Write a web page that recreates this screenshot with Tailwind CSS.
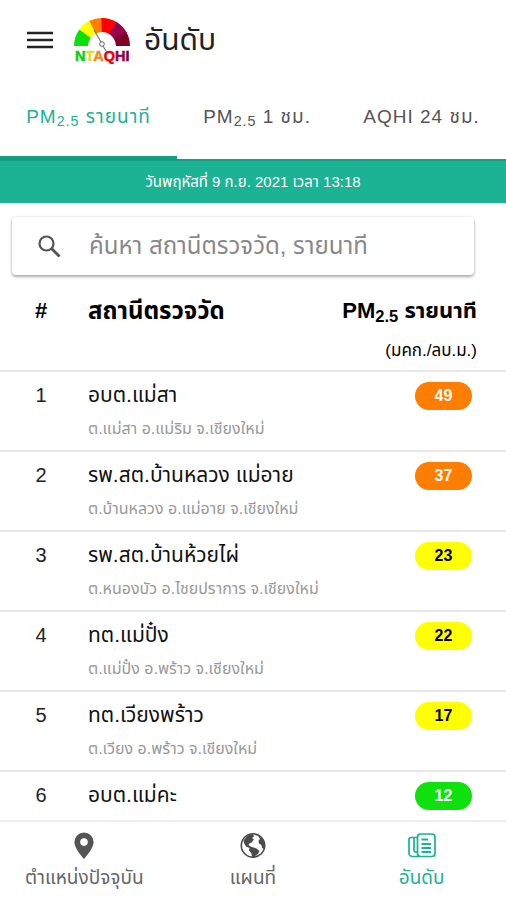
<!DOCTYPE html>
<html lang="th">
<head>
<meta charset="utf-8">
<meta name="viewport" content="width=device-width, initial-scale=1">
<title>อันดับ</title>
<script src="https://cdn.jsdelivr.net/npm/@tailwindcss/browser@4"></script>
</head>
<body class="flex h-screen flex-col overflow-hidden bg-white font-['Liberation_Sans','Noto_Sans_Thai',sans-serif] text-[#222]">
  <header class="shrink-0">
    <div class="flex h-20 items-center pl-[27px]">
      <button type="button" aria-label="เมนู" class="mr-[21px]">
        <svg class="h-[18px] w-[26px]" viewBox="0 0 26 18" stroke="#222" stroke-width="2.4"><path d="M0 2h26M0 9h26M0 16h26"/></svg>
      </button>
      <svg class="mr-[14px] h-12 w-14" viewBox="0 0 56 48" role="img" aria-label="NTAQHI">
        <g fill="none" stroke-width="14">
          <path pathLength="100" stroke="#0be00b" stroke-dasharray="20.5 200" d="M7 30A21 21 0 0 1 49 30"/>
          <path pathLength="100" stroke="#ffff00" stroke-dasharray="17.5 200" stroke-dashoffset="-20" d="M7 30A21 21 0 0 1 49 30"/>
          <path pathLength="100" stroke="#ff7e00" stroke-dasharray="14.5 200" stroke-dashoffset="-35" d="M7 30A21 21 0 0 1 49 30"/>
          <path pathLength="100" stroke="#ff0000" stroke-dasharray="19.5 200" stroke-dashoffset="-49" d="M7 30A21 21 0 0 1 49 30"/>
          <path pathLength="100" stroke="#99004c" stroke-dasharray="17.5 200" stroke-dashoffset="-67" d="M7 30A21 21 0 0 1 49 30"/>
          <path pathLength="100" stroke="#7e0023" stroke-dasharray="18 200" stroke-dashoffset="-83" d="M7 30A21 21 0 0 1 49 30"/>
        </g>
        <path d="M20 14 27 26M29 30l3 5" stroke="#777" stroke-width="1.2"/>
        <circle cx="28" cy="28" r="2.3" fill="#fff" stroke="#666"/>
        <text x="1" y="45" font-family="Liberation Sans" font-size="14.500" font-weight="700" stroke-width=".5"><tspan fill="#0bcf0b" stroke="#0bcf0b">N</tspan><tspan fill="#e8d820" stroke="#e8d820">T</tspan><tspan fill="#ef8a20" stroke="#ef8a20">A</tspan><tspan fill="#f00000" stroke="#f00000">Q</tspan><tspan fill="#99004c" stroke="#99004c">H</tspan><tspan fill="#7e0033" stroke="#7e0033">I</tspan></text>
      </svg>
      <h1 class="text-3xl leading-9">อันดับ</h1>
    </div>
    <nav class="flex h-[79px] justify-between text-[19px] tracking-[1px] text-[#555]">
      <button type="button" class="grow border-b-[3px] border-[#109f80] pb-0.5 whitespace-nowrap text-[#1bb193]">PM<sub>2.5</sub> รายนาที</button>
      <button type="button" class="grow border-b-[3px] border-transparent pb-0.5 whitespace-nowrap">PM<sub>2.5</sub> 1 ชม.</button>
      <button type="button" class="grow border-b-[3px] border-transparent pb-0.5 whitespace-nowrap">AQHI 24 ชม.</button>
    </nav>
    <p class="flex h-11 items-center justify-center border-t-2 border-[#109f80] bg-[#1cb294] text-[15px] text-white">วันพฤหัสที่ 9 ก.ย. 2021 เวลา 13:18</p>
  </header>

  <main class="min-h-0 grow overflow-hidden">
    <label class="mt-[14px] mr-8 ml-3 flex h-[58px] items-center rounded-sm bg-white pl-[25px] shadow-[0_2px_3px_rgba(0,0,0,0.3),0_0_3px_rgba(0,0,0,0.12)]">
      <svg class="h-6 w-6 shrink-0" viewBox="0 0 24 24" fill="none" stroke="#555" stroke-width="2.2"><circle cx="9.5" cy="9.5" r="7"/><path d="m14.5 14.5 8 8" stroke-width="2.8"/></svg>
      <input type="text" aria-label="ค้นหา" placeholder="ค้นหา สถานีตรวจวัด, รายนาที" class="ml-7 w-full min-w-0 text-2xl outline-none placeholder:text-[#888]">
    </label>

    <table class="mt-4 w-full border-collapse text-xl">
      <thead class="text-[22px] text-black">
        <tr class="h-20 align-top">
          <th scope="col" class="w-[88px] pt-1 pr-[6px] leading-8">#</th>
          <th scope="col" class="pt-1 text-left text-2xl leading-8">สถานีตรวจวัด</th>
          <th scope="col" class="pt-1 pr-[29px] text-right leading-8 whitespace-nowrap">PM<sub>2.5</sub> รายนาที<span class="mt-2 block text-[17px] font-normal">(มคก./ลบ.ม.)</span></th>
        </tr>
      </thead>
      <tbody>
        <tr class="h-20 border-t-2 border-[#e8e8e8] align-top">
          <td class="pt-[7px] pr-[6px] text-center leading-8">1</td>
          <td class="pt-[7px] text-[21px] leading-8 text-[#111]">อบต.แม่สา<small class="block text-base leading-9 text-[#999]">ต.แม่สา อ.แม่ริม จ.เชียงใหม่</small></td>
          <td class="pt-[10px] pr-[34px]"><span class="ml-auto flex h-7 w-[57px] items-center justify-center rounded-full bg-[#ff7e00] text-base font-bold text-white">49</span></td>
        </tr>
        <tr class="h-20 border-t-2 border-[#e8e8e8] align-top">
          <td class="pt-[7px] pr-[6px] text-center leading-8">2</td>
          <td class="pt-[7px] text-[21px] leading-8 text-[#111]">รพ.สต.บ้านหลวง แม่อาย<small class="block text-base leading-9 text-[#999]">ต.บ้านหลวง อ.แม่อาย จ.เชียงใหม่</small></td>
          <td class="pt-[10px] pr-[34px]"><span class="ml-auto flex h-7 w-[57px] items-center justify-center rounded-full bg-[#ff7e00] text-base font-bold text-white">37</span></td>
        </tr>
        <tr class="h-20 border-t-2 border-[#e8e8e8] align-top">
          <td class="pt-[7px] pr-[6px] text-center leading-8">3</td>
          <td class="pt-[7px] text-[21px] leading-8 text-[#111]">รพ.สต.บ้านห้วยไผ่<small class="block text-base leading-9 text-[#999]">ต.หนองบัว อ.ไชยปราการ จ.เชียงใหม่</small></td>
          <td class="pt-[10px] pr-[34px]"><span class="ml-auto flex h-7 w-[57px] items-center justify-center rounded-full bg-[#ffff00] text-base font-bold text-black">23</span></td>
        </tr>
        <tr class="h-20 border-t-2 border-[#e8e8e8] align-top">
          <td class="pt-[7px] pr-[6px] text-center leading-8">4</td>
          <td class="pt-[7px] text-[21px] leading-8 text-[#111]">ทต.แม่ปั๋ง<small class="block text-base leading-9 text-[#999]">ต.แม่ปั๋ง อ.พร้าว จ.เชียงใหม่</small></td>
          <td class="pt-[10px] pr-[34px]"><span class="ml-auto flex h-7 w-[57px] items-center justify-center rounded-full bg-[#ffff00] text-base font-bold text-black">22</span></td>
        </tr>
        <tr class="h-20 border-t-2 border-[#e8e8e8] align-top">
          <td class="pt-[7px] pr-[6px] text-center leading-8">5</td>
          <td class="pt-[7px] text-[21px] leading-8 text-[#111]">ทต.เวียงพร้าว<small class="block text-base leading-9 text-[#999]">ต.เวียง อ.พร้าว จ.เชียงใหม่</small></td>
          <td class="pt-[10px] pr-[34px]"><span class="ml-auto flex h-7 w-[57px] items-center justify-center rounded-full bg-[#ffff00] text-base font-bold text-black">17</span></td>
        </tr>
        <tr class="border-t-2 border-[#e8e8e8] align-top">
          <td class="pt-[7px] pr-[6px] text-center leading-8">6</td>
          <td class="pt-[7px] text-[21px] leading-8 text-[#111]">อบต.แม่คะ</td>
          <td class="pt-[10px] pr-[34px]"><span class="ml-auto flex h-7 w-[57px] items-center justify-center rounded-full bg-[#0fe10f] text-base font-bold text-white">12</span></td>
        </tr>
      </tbody>
    </table>
  </main>

  <nav class="grid h-20 shrink-0 grid-cols-3 border-t-2 border-[#eee] bg-white text-[19px] text-[#666]">
    <a href="#location" class="flex flex-col items-center pt-2">
      <svg class="h-8 w-8" viewBox="0 0 32 32"><path fill="#555" fill-rule="evenodd" d="M16 2.500a9.600 9.600 0 0 0-9.600 9.600C6.400 19 16 29 16 29s9.600-10 9.600-16.900A9.600 9.600 0 0 0 16 2.500zm0 5.800a3.800 3.800 0 1 1 0 7.600 3.800 3.800 0 0 1 0-7.600z"/></svg>
      <span class="leading-8">ตำแหน่งปัจจุบัน</span>
    </a>
    <a href="#map" class="flex flex-col items-center pt-2">
      <svg class="h-8 w-8" viewBox="0 0 32 32" fill="#4a4a4a"><circle cx="16" cy="15.500" r="11.700" fill="none" stroke="#4a4a4a" stroke-width="1.600"/><path d="M6.500 10.500 11 5.300l5-1.300 1 2.500-2 1.500 2 1.500-2.500 3-3 1.500 1 2 2.500 1 4.500 1.500 3 2.500-1.500 3-2.500 1.500-1.500 2.500-2-.5-.5-4-2.500-3 .5-2.500-3.500-1.500-2-3.500z"/><path d="m21 5.500 4 3 2.500 5-.5 5.500-2-1-.5-3-2.500-1.500-.5-3 1.500-1.500z"/></svg>
      <span class="leading-8">แผนที่</span>
    </a>
    <a href="#ranking" aria-current="page" class="flex flex-col items-center pt-2 text-[#1bb193]">
      <svg class="h-8 w-8" viewBox="0 0 32 32" fill="none" stroke="#1bb193" stroke-width="1.700"><rect x="11.500" y="4" width="17.500" height="22.500" rx="3"/><path d="M14 26.500H6.500A3.500 3.500 0 0 1 3 23V9.500a2 2 0 0 1 2-2h6.500M8 7.500v12.500a2 2 0 0 0 3.500 1.500"/><path d="M15.500 9.500h6.500M15.500 14h9.500M15.500 18h9.500M15.500 22h9.500" stroke-width="1.900"/></svg>
      <span class="leading-8">อันดับ</span>
    </a>
  </nav>
</body>
</html>
